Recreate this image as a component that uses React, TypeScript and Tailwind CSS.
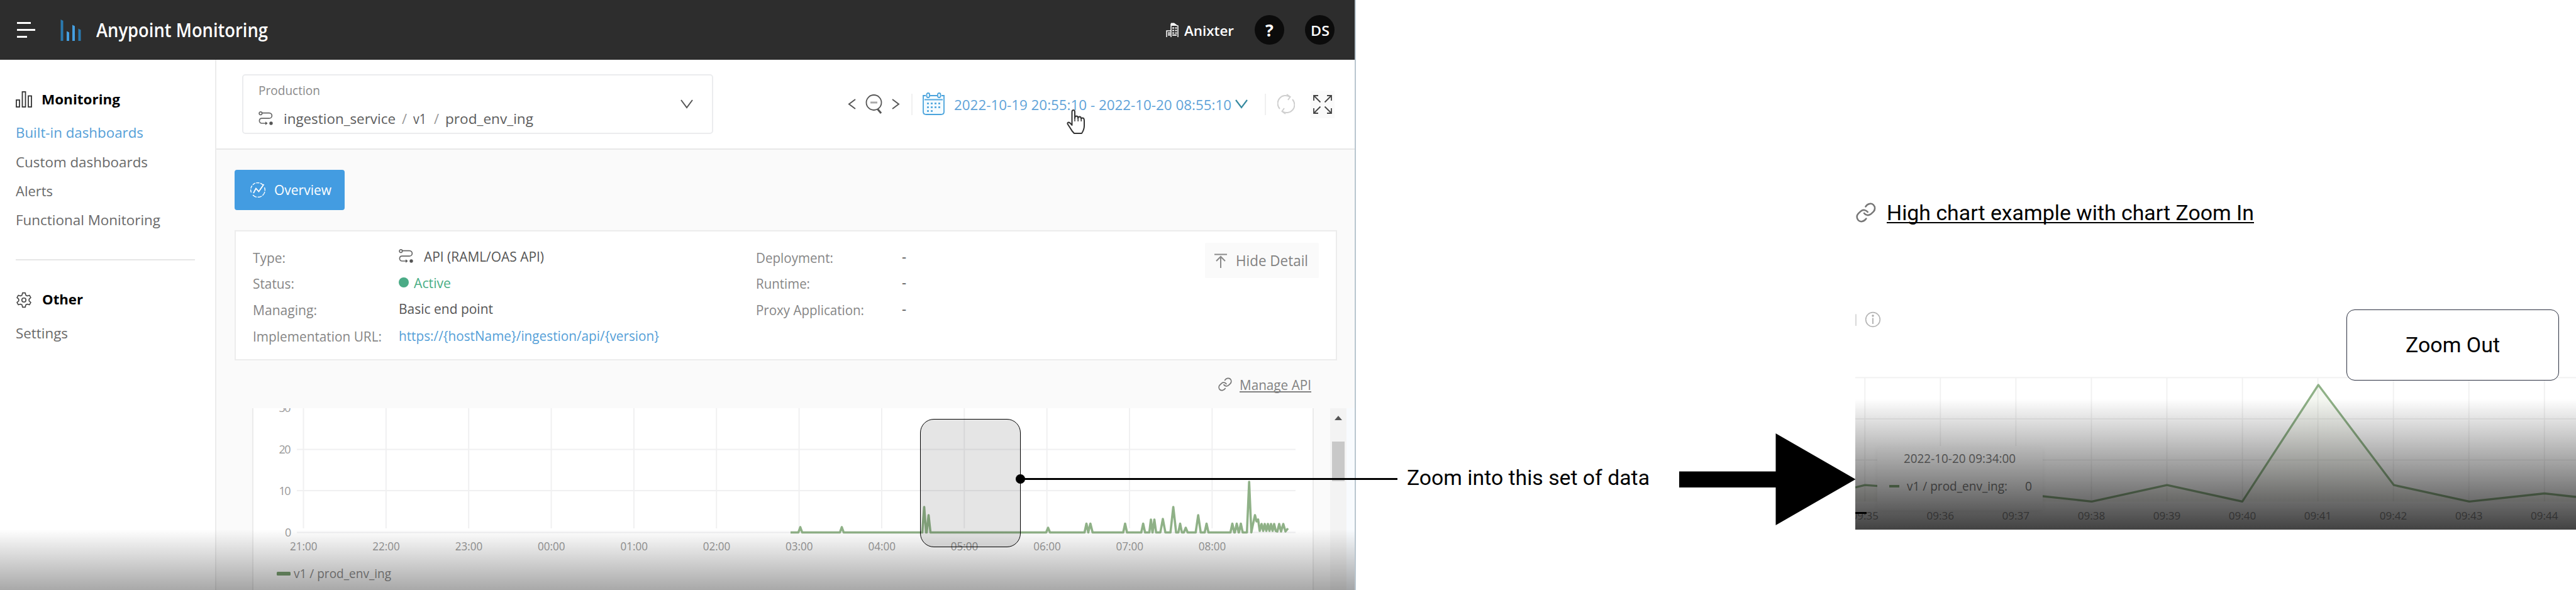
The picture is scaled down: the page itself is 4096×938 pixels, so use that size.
import { useLayoutEffect, useRef, type ReactNode } from "react";

/* A single line of text stretched horizontally to an exact width. */
function Fit({ w, className = "", children }: { w: number; className?: string; children: ReactNode }) {
  const ref = useRef<HTMLSpanElement>(null);
  useLayoutEffect(() => {
    const el = ref.current;
    if (!el) return;
    el.style.transform = "none";
    const natural = el.getBoundingClientRect().width;
    if (natural > 0) el.style.transform = `scaleX(${w / natural})`;
  }, [w, children]);
  return (
    <span className="block shrink-0 leading-none" style={{ width: w }}>
      <span ref={ref} className={`inline-block origin-left whitespace-nowrap leading-none ${className}`}>
        {children}
      </span>
    </span>
  );
}

function LinkIcon({ className }: { className: string }) {
  return (
    <svg viewBox="88 172 137 136" className={className} fill="none" stroke="#777" strokeWidth="11" strokeLinecap="round">
      <path d="M154 199C170 176 194 175 207 187C220 200 220 220 208 233L190 250C176 262 156 260 144 244" />
      <path d="M158 281C142 304 118 305 105 293C92 280 92 260 104 247L122 230C136 218 156 220 168 236" />
    </svg>
  );
}

function RouteIcon() {
  return (
    <svg viewBox="0 0 23 22" className="h-[22px] w-[23px] shrink-0" fill="none" stroke="#666" strokeWidth="1.7">
      <circle cx="3.4" cy="3.2" r="2.3" />
      <path d="M5.8 2.6H17a4.4 4.4 0 0 1 4.4 4.4a4.4 4.4 0 0 1-4.4 4.2H5.2A4 4 0 0 0 1.4 15a4 4 0 0 0 4 4H12" />
      <path d="M11 16.2L14.6 19L11 21.8Z" fill="#555" stroke="none" />
      <circle cx="20" cy="19" r="2.7" fill="#555" stroke="none" />
    </svg>
  );
}

function Header() {
  return (
    <header className="flex h-[95px] w-full items-center bg-[#2d2d2d] pl-[27px] text-white">
      <div className="flex w-[29px] flex-col gap-[8px]">
        <i className="block h-[3px] w-[22px] bg-white" />
        <i className="block h-[3px] w-[29px] bg-white" />
        <i className="block h-[3px] w-[16px] bg-white" />
      </div>
      <svg viewBox="0 0 33 34" className="ml-[40px] h-[34px] w-[33px]">
        <path d="M0.5 0L4.5 2V34H0.5Z" fill="#2a7ab0" />
        <path d="M10 18.5L14 20.5V34H10Z" fill="#459fe0" />
        <path d="M19 8.5L23 10.5V34H19Z" fill="#459fe0" />
        <path d="M28.5 14.5L32.5 16.5V34H28.5Z" fill="#2a7ab0" />
      </svg>
      <div className="ml-[24px]">
        <Fit w={273} className="text-[31px] font-semibold">Anypoint Monitoring</Fit>
      </div>
      <svg viewBox="0 0 20 23" className="ml-[1428px] h-[23px] w-[20px]" fill="none" stroke="#fff" strokeWidth="1.5">
        <path d="M1 23V13H8M8 23V2.5L19 5V23" />
        <path d="M8 0.500L13 0.500L19 5L8 5Z" fill="#fff" stroke="none" />
        <path d="M10 8.500h3M14.500 8.500h3M10 12.500h3M14.500 12.500h3M10 16.500h3M14.500 16.500h3M3 16.500h4M3 19.500h4M10 19.800h7" strokeWidth="2" />
      </svg>
      <div className="ml-[9px]">
        <Fit w={79} className="text-[22px] font-semibold">Anixter</Fit>
      </div>
      <div className="ml-[33px] flex size-[47px] items-center justify-center rounded-full bg-[#0b0b0b] text-[27px] leading-none font-bold">?</div>
      <div className="ml-[33px] flex size-[47px] items-center justify-center rounded-full bg-[#0b0b0b]">
        <Fit w={30} className="text-[22px] font-semibold">DS</Fit>
      </div>
    </header>
  );
}

const NAV: { label: string; w: number; active?: boolean }[] = [
  { label: "Built-in dashboards", w: 203, active: true },
  { label: "Custom dashboards", w: 210 },
  { label: "Alerts", w: 59 },
  { label: "Functional Monitoring", w: 230 },
];

function Sidebar() {
  return (
    <aside className="h-full w-[344px] shrink-0 border-r-2 border-[#ececec] bg-white pl-[25px]">
      <div className="mt-[43px] flex h-[40px] items-center text-black">
        <svg viewBox="0 0 26 26" className="h-[26px] w-[26px]" fill="none" stroke="#333" strokeWidth="1.8">
          <rect x="1" y="14" width="5" height="11" />
          <rect x="10.5" y="1" width="5" height="24" />
          <rect x="20" y="7.500" width="5" height="17.500" />
        </svg>
        <div className="ml-[15px]">
          <Fit w={125} className="text-[21px] font-bold">Monitoring</Fit>
        </div>
      </div>
      <nav className="pt-[9px]">
        {NAV.map((n) => (
          <div key={n.label} className={`flex h-[46.4px] items-center ${n.active ? "text-[#559fd8]" : "text-[#6a6a6a]"}`}>
            <Fit w={n.w} className="text-[22px]">{n.label}</Fit>
          </div>
        ))}
      </nav>
      <div className="mt-[39px] h-[2px] w-[285px] bg-[#e6e6e6]" />
      <div className="mt-[43px] flex h-[40px] items-center text-black">
        <svg viewBox="0 0 24 24" className="h-[28px] w-[26px]" fill="none" stroke="#444" strokeWidth="1.5" strokeLinejoin="round">
          <path d="M10 1.5h4l.7 3.3 2.2 1.2 3.200-1 2 3.500-2.500 2.200v2.600l2.500 2.200-2 3.500-3.200-1-2.200 1.200-.7 3.300h-4l-.7-3.300-2.200-1.200-3.200 1-2-3.500 2.500-2.200v-2.600l-2.500-2.200 2-3.500 3.200 1 2.200-1.200z" />
          <circle cx="12" cy="12" r="3" />
        </svg>
        <div className="ml-[16px]">
          <Fit w={65} className="text-[21px] font-bold">Other</Fit>
        </div>
      </div>
      <div className="mt-[9px] flex h-[46px] items-center text-[#6a6a6a]">
        <Fit w={83} className="text-[22px]">Settings</Fit>
      </div>
    </aside>
  );
}

function Toolbar() {
  return (
    <div className="relative flex h-[143px] w-full items-center border-b-2 border-[#e8e8e8] bg-white pl-[41px]">
      <div className="flex h-[95px] w-[749px] items-center justify-between rounded-[5px] border-2 border-[#ebecee] pr-[30px] pl-[24px]">
        <div className="flex flex-col gap-[14px]">
          <div className="flex h-[30px] items-center text-[#8a8a8a]">
            <Fit w={98} className="text-[20px]">Production</Fit>
          </div>
          <div className="flex h-[30px] items-center text-[#5c5c5c]">
            <RouteIcon />
            <div className="ml-[17px]"><Fit w={178} className="text-[22px]">ingestion_service</Fit></div>
            <span className="ml-[10px] w-[18px] text-[22px] leading-none text-[#999]">/</span>
            <Fit w={21} className="text-[22px]">v1</Fit>
            <span className="ml-[12px] w-[18px] text-[22px] leading-none text-[#999]">/</span>
            <Fit w={140} className="text-[22px]">prod_env_ing</Fit>
          </div>
        </div>
        <svg viewBox="0 0 20 15" className="h-[15px] w-[20px]" fill="none" stroke="#555" strokeWidth="2">
          <path d="M1 1L10 13L19 1" />
        </svg>
      </div>
      <svg viewBox="0 0 13 17" className="ml-[214px] h-[17px] w-[13px]" fill="none" stroke="#555" strokeWidth="2">
        <path d="M12 1L2 8.5L12 16" />
      </svg>
      <svg viewBox="0 0 27 31" className="ml-[15px] h-[31px] w-[27px]" fill="none" stroke="#555" strokeWidth="1.800">
        <circle cx="13.500" cy="13" r="12" />
        <path d="M19.500 23.500L25 30" strokeWidth="3" />
        <path d="M8 13H19" stroke="#aaa" strokeWidth="3" />
      </svg>
      <svg viewBox="0 0 13 17" className="ml-[15px] h-[17px] w-[13px]" fill="none" stroke="#555" strokeWidth="2">
        <path d="M1 1L11 8.5L1 16" />
      </svg>
      <div className="ml-[18px] h-[34px] w-[2px] bg-[#f0f0f0]" />
      <svg viewBox="0 0 35 37" className="ml-[16px] h-[37px] w-[35px]" fill="none" stroke="#4aa3dc" strokeWidth="1.800">
        <path d="M5 5H1V31Q1 35 6 35H29Q34 35 34 31V5H30M12 5H23" fill="#f4fbff" />
        <rect x="6.500" y="1" width="4.500" height="7" rx="2.200" fill="#fff" />
        <rect x="24" y="1" width="4.500" height="7" rx="2.200" fill="#fff" />
        <path d="M3 11.500H32" />
        <path d="M7 17.500H29M7 23.500H29" strokeWidth="2.400" strokeDasharray="3 3" />
        <path d="M7 29.500H17" strokeWidth="2.400" strokeDasharray="3 3" />
      </svg>
      <div className="ml-[15px] text-[#5fa3d9]">
        <Fit w={441} className="text-[22px]">2022-10-19 20:55:10 - 2022-10-20 08:55:10</Fit>
      </div>
      <svg viewBox="0 0 20 15" className="ml-[6px] h-[15px] w-[20px]" fill="none" stroke="#35899f" strokeWidth="2.200">
        <path d="M1 1L10 13L19 1" />
      </svg>
      <div className="ml-[27px] h-[34px] w-[2px] bg-[#f0f0f0]" />
      <svg viewBox="0 0 28 33" className="ml-[18px] h-[33px] w-[28px]" fill="none" stroke="#cfcfcf" strokeWidth="2">
        <path d="M4 24A12.500 12.500 0 0 1 20 5M24 9A12.500 12.500 0 0 1 8 28" />
        <path d="M15 1L20.500 5L17 10M13 32L7.500 28L11 23" />
      </svg>
      <div className="ml-[25px] flex h-[44px] w-[38px] items-center justify-center bg-[#fafafa]">
        <svg viewBox="0 0 30 30" className="h-[30px] w-[30px]" fill="none" stroke="#444" strokeWidth="1.800">
          <path d="M1 9V1H8M1 1L11.500 11.500M22 1H29V9M29 1L18.500 11.500M1 21V29H8M1 29L11.500 18.500M22 29H29V21M29 29L18.500 18.500" />
        </svg>
      </div>
      <svg viewBox="0 0 29 40" className="absolute top-[79px] left-[1352px] h-[40px] w-[29px]" fill="#fff" stroke="#333" strokeWidth="2" strokeLinejoin="round">
        <path d="M8.500 25V4Q8.500 1 10.800 1Q13 1 13 4V14Q13 10.500 15.500 10.500Q18 10.500 18.200 14Q18.500 11.500 20.500 11.500Q23 11.500 23.200 15Q24 13 25.800 13.500Q28 14 28 18V26Q28 32 24 38H12Q8 34 6 30L1.500 23Q1 20.500 3.500 20.500Q5.500 21 8.500 25Z" />
        <path d="M13 13V19M18.200 13V19M23.200 14V19" strokeWidth="1.500" />
      </svg>
    </div>
  );
}

function Label({ w, children }: { w: number; children: ReactNode }) {
  return (
    <div className="flex h-[41.6px] items-center text-[#868686]">
      <Fit w={w} className="text-[22px]">{children}</Fit>
    </div>
  );
}

function Details() {
  return (
    <div className="mt-[32px] ml-[29px] flex h-[207px] w-[1753px] items-start border-2 border-[#ececec] bg-white pt-[20px] pl-[27px]">
      <div className="w-[232px]">
        <Label w={52}>Type:</Label>
        <Label w={66}>Status:</Label>
        <Label w={102}>Managing:</Label>
        <Label w={205}>Implementation URL:</Label>
      </div>
      <div className="w-[568px] text-[#555]">
        <div className="flex h-[41.6px] items-center pb-[4px]">
          <RouteIcon />
          <div className="ml-[17px]"><Fit w={191} className="text-[22px]">API (RAML/OAS API)</Fit></div>
        </div>
        <div className="flex h-[41.6px] items-center pb-[3px] text-[#4aae85]">
          <span className="block size-[16px] rounded-full bg-[#4aab86]" />
          <div className="ml-[8px]"><Fit w={59} className="text-[22px]">Active</Fit></div>
        </div>
        <div className="flex h-[41.6px] items-center pb-[3px]">
          <Fit w={150} className="text-[22px]">Basic end point</Fit>
        </div>
        <div className="flex h-[41.6px] items-center pb-[1px] text-[#559fd8]">
          <Fit w={414} className="text-[22px]">{"https://{hostName}/ingestion/api/{version}"}</Fit>
        </div>
      </div>
      <div className="w-[232px]">
        <Label w={123}>Deployment:</Label>
        <Label w={86}>Runtime:</Label>
        <Label w={172}>Proxy Application:</Label>
      </div>
      <div className="w-[482px] text-[22px] leading-none text-[#505050]">
        <div className="flex h-[41.6px] items-center pb-[4px]">-</div>
        <div className="flex h-[41.6px] items-center pb-[4px]">-</div>
        <div className="flex h-[41.6px] items-center pb-[4px]">-</div>
      </div>
      <div className="mt-[-2px] flex h-[56px] w-[181px] items-center rounded-[2px] bg-[#fafafa] pt-[1px] pl-[15px] text-[#828282]">
        <svg viewBox="0 0 20 24" className="h-[24px] w-[20px]" fill="none" stroke="#8a8a8a" strokeWidth="2">
          <path d="M0 1.500H20M10 23V5.500M3 12L10 5L17 12" />
        </svg>
        <div className="ml-[14px]"><Fit w={115} className="text-[23.500px]">Hide Detail</Fit></div>
      </div>
    </div>
  );
}

const HOURS = ["21:00", "22:00", "23:00", "00:00", "01:00", "02:00", "03:00", "04:00", "05:00", "06:00", "07:00", "08:00"];

/* [x, peak y, half width] of every spike above the zero line. */
const SPIKES: [number, number, number][] = [
  [1272.5, 838, 3], [1338.5, 838, 3], [1469.5, 806, 3], [1476.5, 819, 3], [1666.500, 839, 3],
  [1727.500, 832.500, 3], [1733.800, 832.500, 3.500], [1789, 832.500, 3], [1817.700, 832.500, 3], [1830, 826, 2.500], [1835.500, 826, 2.800],
  [1849, 825, 4], [1865.600, 806, 4.500], [1876.500, 832.500, 2.800], [1885.400, 839, 3], [1905.200, 819, 4],
  [1918.500, 832.500, 3], [1959.500, 832.500, 3], [1966.500, 832.500, 3], [1973, 832.500, 3], [1986.200, 766, 3.500],
];

function trafficPath() {
  let d = "M1257 846.500";
  for (const [x, y, h] of SPIKES) d += `L${x - h} 846.5L${x} ${y}L${x + h} 846.5`;
  d += "L1992 835L1995.500 819L1998 829L2000.500 826L2003 844";
  for (let x = 2006; x < 2030; x += 5) d += `L${x} 833L${x + 2.5} 844`;
  d += "L2031 845L2034 833L2037 845L2040.500 833L2044 845L2048 840";
  return d;
}

function HourChart() {
  return (
    <svg viewBox="403 649 1684 289" className="h-[289px] w-[1684px]" fontFamily="'Open Sans', sans-serif">
      <g stroke="#f0f0f1" strokeWidth="2">
        {HOURS.map((h, i) => (
          <path key={h} d={`M${482.5 + 131.35 * i} 649V840`} />
        ))}
        <path d="M472 714.500H2060M472 780H2060M472 846.500H2060" />
      </g>
      <g fontSize="18" fill="#9a9a9a">
        <text x="443.500" y="655" textLength="19">30</text>
        <text x="443.500" y="720.500" textLength="19">20</text>
        <text x="443.500" y="787" textLength="19">10</text>
        <text x="453" y="852.500">0</text>
        {HOURS.map((h, i) => (
          <text key={h} x={461 + 131.35 * i} y="875" textLength="43.500" lengthAdjust="spacingAndGlyphs">{h}</text>
        ))}
      </g>
      <path d={trafficPath()} fill="none" stroke="#8fb187" strokeWidth="3.600" strokeLinejoin="round" />
      <rect x="440" y="909" width="22" height="6" rx="1.500" fill="#7ca273" />
      <text x="467" y="918.500" fontSize="19.500" fill="#8d8d8d" textLength="155" lengthAdjust="spacingAndGlyphs">v1 / prod_env_ing</text>
    </svg>
  );
}

function MonitoringApp() {
  return (
    <section className="relative flex h-full w-[2156px] shrink-0 flex-col overflow-hidden border-r-2 border-[#b9c6cf]">
      <Header />
      <div className="flex h-[843px] w-full">
        <Sidebar />
        <main className="flex w-[1811px] flex-col bg-[#fafafa]">
          <Toolbar />
          <div className="mt-[32px] ml-[29px] flex h-[64px] w-[175px] shrink-0 items-center rounded-[4px] bg-[#439ce1] pl-[25px] text-white">
            <svg viewBox="0 0 24 24" className="h-[24px] w-[24px]" fill="none" stroke="#fff" strokeWidth="1.400">
              <path d="M20 4A11.200 11.200 0 0 0 2 17" strokeDasharray="5 1.500" />
              <path d="M4 20A11.200 11.200 0 0 0 22.500 8" strokeDasharray="7 1.500" />
              <path d="M5 17L9 9.500L13.500 14.500L21.500 3" strokeWidth="1.800" />
            </svg>
            <div className="ml-[14px]"><Fit w={91} className="text-[21px]">Overview</Fit></div>
          </div>
          <Details />
          <div className="mt-[18px] flex h-[40px] shrink-0 items-center justify-end pr-[69px] text-[#828282]">
            <LinkIcon className="h-[24px] w-[22px]" />
            <div className="ml-[12px]">
              <Fit w={114} className="text-[22px] underline decoration-[1.5px] underline-offset-[2px] [text-decoration-skip-ink:none]">Manage API</Fit>
            </div>
          </div>
          <div className="mt-[18px] flex flex-1">
            <div className="ml-[57px] w-[1688px] border-x-2 border-[#ebebeb] bg-white">
              <HourChart />
            </div>
            <div className="ml-[26px] flex w-[26px] flex-col items-center bg-[#f3f3f3] pt-[12px]">
              <svg viewBox="0 0 12 7" className="h-[7px] w-[12px]"><path d="M6 0L12 7H0Z" fill="#555" /></svg>
              <div className="mt-[34px] h-[63px] w-[20px] bg-[#c8c8c8]" />
            </div>
            <div className="flex-1 bg-[#f8fbfe]" />
          </div>
        </main>
      </div>
      <div className="absolute bottom-0 left-0 h-[97px] w-full bg-linear-to-b from-black/0 to-black/34" />
    </section>
  );
}

const MINUTES = ["09:35", "09:36", "09:37", "09:38", "09:39", "09:40", "09:41", "09:42", "09:43", "09:44"];

function MinuteChart() {
  const line = "M2950 775L2965.500 771.200L3086 780L3206.500 784.500L3326 797.300L3445.700 771.200L3565.400 797.300L3686.300 612L3806.400 771.200L3926.300 797.300L4045.800 784.500L4096 790";
  return (
    <svg viewBox="2950 490 1146 352" className="h-[352px] w-[1146px]" fontFamily="'Open Sans', sans-serif">
      <defs>
        <linearGradient id="area" x1="0" y1="0" x2="0" y2="1">
          <stop offset="0" stopColor="#a5bd8c" stopOpacity="0.12" />
          <stop offset="1" stopColor="#b5b890" stopOpacity="0.1" />
        </linearGradient>
      </defs>
      <path d="M2951 499.500V518" stroke="#ccc" strokeWidth="1.500" />
      <g fill="none" stroke="#b5b5b5" strokeWidth="1.700">
        <circle cx="2978" cy="508" r="11.300" />
        <path d="M2978 505.500V515" strokeWidth="2" />
      </g>
      <circle cx="2978" cy="502" r="1.700" fill="#aaa" />
      <g stroke="#f0f0f0" strokeWidth="1.800">
        {MINUTES.map((m, i) => (
          <path key={m} d={`M${2965.300 + 120.050 * i} 600V797`} />
        ))}
        <path d="M2950 600.300H4096M2950 665.800H4096M2950 731.300H4096" />
      </g>
      <path d={`${line}V797.300H2950Z`} fill="url(#area)" />
      <path d={line} fill="none" stroke="#8fb187" strokeWidth="3.300" strokeLinejoin="round" />
      <g fontSize="17.200" fill="#969696">
        {MINUTES.map((m, i) => (
          <text key={m} x={2943.500 + 120.050 * i} y="826" textLength="43.500" lengthAdjust="spacingAndGlyphs">{m}</text>
        ))}
      </g>
    </svg>
  );
}

function ZoomedPanel() {
  return (
    <section className="h-full w-[1146px] shrink-0 pt-[318px] font-['Roboto',sans-serif]">
      <div className="flex h-[40px] items-center pl-[1px] text-black">
        <LinkIcon className="h-[32px] w-[32px]" />
        <div className="ml-[17px]">
          <Fit w={584} className="text-[34px] underline decoration-[2px] underline-offset-[3px] [text-decoration-skip-ink:none]">
            High chart example with chart Zoom In
          </Fit>
        </div>
      </div>
      <div className="relative mt-[132px] h-[352px] w-full overflow-hidden">
        <MinuteChart />
        <div className="absolute top-[219px] left-[35px] flex h-[102px] w-[263px] flex-col bg-[#fdfdfd] pt-[9px] font-['Open_Sans',sans-serif] text-[#777] shadow-[0_3px_8px_-1px_rgba(0,0,0,0.07)]">
          <div className="flex h-[22px] items-center pl-[42px]">
            <Fit w={178} className="text-[20px]">2022-10-20 09:34:00</Fit>
          </div>
          <div className="mt-[22px] flex h-[22px] items-center pl-[19px]">
            <i className="block h-[4px] w-[16px] bg-[#86aa7c]" />
            <div className="ml-[12px]"><Fit w={160} className="text-[20px]">v1 / prod_env_ing:</Fit></div>
            <div className="ml-[28px]"><Fit w={11} className="text-[20px]">0</Fit></div>
          </div>
        </div>
        <div className="absolute bottom-0 left-0 h-[208px] w-full bg-linear-to-b from-black/0 to-black/74" />
        <div className="absolute top-[324px] left-0 h-[3px] w-[18px] bg-black" />
        <div className="absolute top-[2px] left-[781px] flex h-[113px] w-[338px] items-center justify-center rounded-[13px] border-[1.500px] border-[#2b3040] bg-white pb-[1px] text-black">
          <Fit w={150} className="text-[33px]">Zoom Out</Fit>
        </div>
      </div>
    </section>
  );
}

export default function App() {
  return (
    <div className="relative flex h-[938px] w-[4096px] overflow-hidden bg-white font-['Open_Sans',sans-serif]">
      <MonitoringApp />
      <div className="flex h-full w-[794px] shrink-0 items-start pt-[689px] pl-[81px] font-['Roboto',sans-serif]">
        <div className="flex h-[146px] items-center pb-[4px]">
          <Fit w={386} className="text-[33.500px] text-black">Zoom into this set of data</Fit>
        </div>
        <svg viewBox="0 0 281 146" className="ml-[47px] h-[146px] w-[281px] shrink-0">
          <path d="M0 60.500H153.500V0L280.500 73L153.500 146V86H0Z" fill="#000" />
        </svg>
      </div>
      <ZoomedPanel />
      <div className="absolute top-[666px] left-[1463px] h-[204px] w-[160px] rounded-[22px] border-[1.500px] border-black bg-black/10" />
      <div className="absolute top-[760px] left-[1623px] h-[3px] w-[599px] bg-black" />
      <div className="absolute top-[754px] left-[1615px] size-[15px] rounded-full bg-black" />
    </div>
  );
}
